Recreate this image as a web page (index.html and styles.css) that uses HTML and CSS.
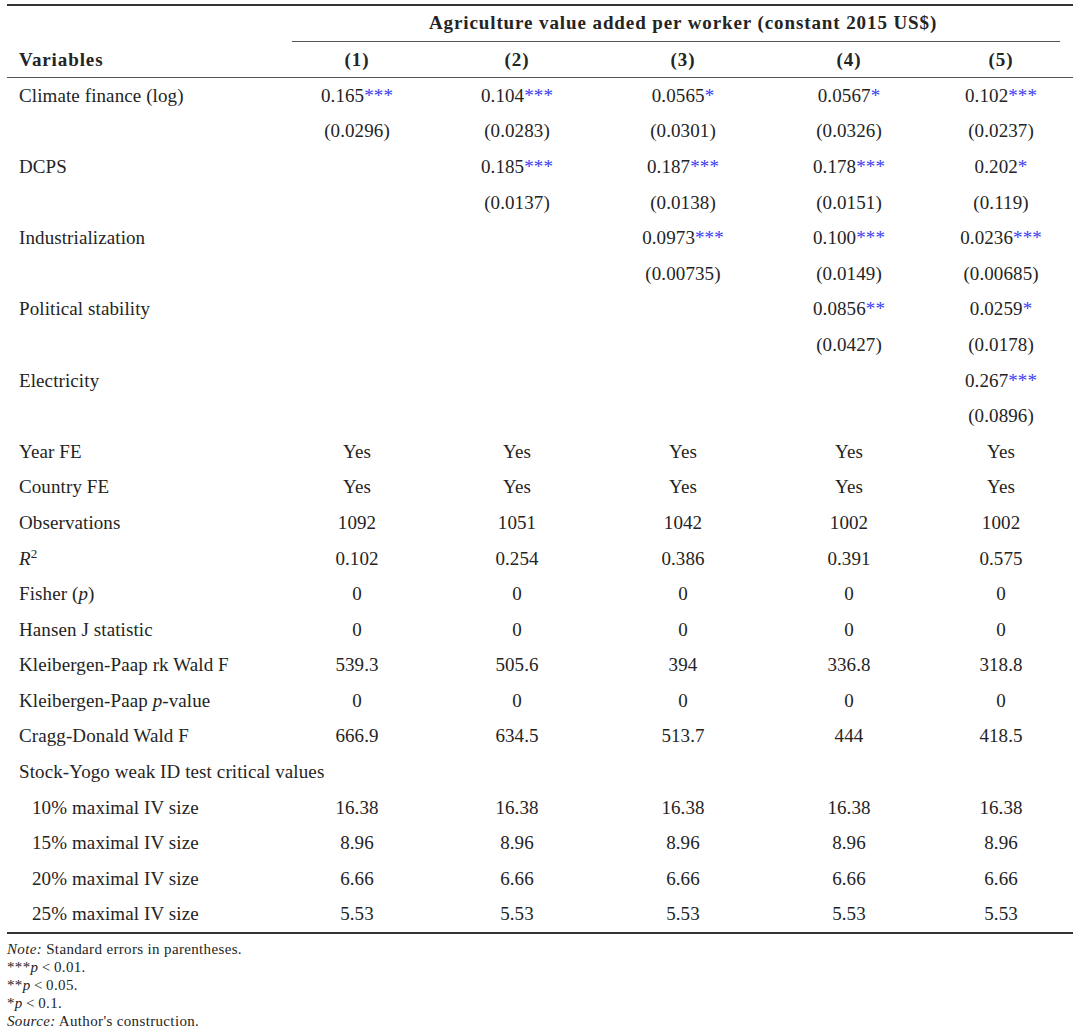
FILE: index.html
```html
<!DOCTYPE html>
<html>
<head>
<meta charset="utf-8">
<link rel="stylesheet" href="styles.css">
</head>
<body>
<div class="page">
<table class="reg">
  <colgroup>
    <col class="c-var"><col class="c1"><col class="c2"><col class="c3"><col class="c4"><col class="c5">
  </colgroup>
  <thead>
    <tr class="h1">
      <th></th>
      <th colspan="5" class="span"><div class="spanline">Agriculture value added per worker (constant 2015 US$)</div></th>
    </tr>
    <tr class="h2">
      <th class="lab">Variables</th><th>(1)</th><th>(2)</th><th>(3)</th><th>(4)</th><th>(5)</th>
    </tr>
  </thead>
  <tbody>
    <tr><td class="lab">Climate finance (log)</td><td>0.165<span class="s">***</span></td><td>0.104<span class="s">***</span></td><td>0.0565<span class="s">*</span></td><td>0.0567<span class="s">*</span></td><td>0.102<span class="s">***</span></td></tr>
    <tr><td class="lab"></td><td>(0.0296)</td><td>(0.0283)</td><td>(0.0301)</td><td>(0.0326)</td><td>(0.0237)</td></tr>
    <tr><td class="lab">DCPS</td><td></td><td>0.185<span class="s">***</span></td><td>0.187<span class="s">***</span></td><td>0.178<span class="s">***</span></td><td>0.202<span class="s">*</span></td></tr>
    <tr><td class="lab"></td><td></td><td>(0.0137)</td><td>(0.0138)</td><td>(0.0151)</td><td>(0.119)</td></tr>
    <tr><td class="lab">Industrialization</td><td></td><td></td><td>0.0973<span class="s">***</span></td><td>0.100<span class="s">***</span></td><td>0.0236<span class="s">***</span></td></tr>
    <tr><td class="lab"></td><td></td><td></td><td>(0.00735)</td><td>(0.0149)</td><td>(0.00685)</td></tr>
    <tr><td class="lab">Political stability</td><td></td><td></td><td></td><td>0.0856<span class="s">**</span></td><td>0.0259<span class="s">*</span></td></tr>
    <tr><td class="lab"></td><td></td><td></td><td></td><td>(0.0427)</td><td>(0.0178)</td></tr>
    <tr><td class="lab">Electricity</td><td></td><td></td><td></td><td></td><td>0.267<span class="s">***</span></td></tr>
    <tr><td class="lab"></td><td></td><td></td><td></td><td></td><td>(0.0896)</td></tr>
    <tr><td class="lab">Year FE</td><td>Yes</td><td>Yes</td><td>Yes</td><td>Yes</td><td>Yes</td></tr>
    <tr><td class="lab">Country FE</td><td>Yes</td><td>Yes</td><td>Yes</td><td>Yes</td><td>Yes</td></tr>
    <tr><td class="lab">Observations</td><td>1092</td><td>1051</td><td>1042</td><td>1002</td><td>1002</td></tr>
    <tr><td class="lab"><i>R</i><sup>2</sup></td><td>0.102</td><td>0.254</td><td>0.386</td><td>0.391</td><td>0.575</td></tr>
    <tr><td class="lab">Fisher (<i>p</i>)</td><td>0</td><td>0</td><td>0</td><td>0</td><td>0</td></tr>
    <tr><td class="lab">Hansen J statistic</td><td>0</td><td>0</td><td>0</td><td>0</td><td>0</td></tr>
    <tr><td class="lab">Kleibergen-Paap rk Wald F</td><td>539.3</td><td>505.6</td><td>394</td><td>336.8</td><td>318.8</td></tr>
    <tr><td class="lab">Kleibergen-Paap <i>p</i>-value</td><td>0</td><td>0</td><td>0</td><td>0</td><td>0</td></tr>
    <tr><td class="lab">Cragg-Donald Wald F</td><td>666.9</td><td>634.5</td><td>513.7</td><td>444</td><td>418.5</td></tr>
    <tr><td class="lab" colspan="6">Stock-Yogo weak ID test critical values</td></tr>
    <tr><td class="lab ind">10% maximal IV size</td><td>16.38</td><td>16.38</td><td>16.38</td><td>16.38</td><td>16.38</td></tr>
    <tr><td class="lab ind">15% maximal IV size</td><td>8.96</td><td>8.96</td><td>8.96</td><td>8.96</td><td>8.96</td></tr>
    <tr><td class="lab ind">20% maximal IV size</td><td>6.66</td><td>6.66</td><td>6.66</td><td>6.66</td><td>6.66</td></tr>
    <tr><td class="lab ind">25% maximal IV size</td><td>5.53</td><td>5.53</td><td>5.53</td><td>5.53</td><td>5.53</td></tr>
  </tbody>
</table>
<div class="notes">
  <div><i>Note:</i> Standard errors in parentheses.</div>
  <div>***<i>p</i>&thinsp;&lt;&thinsp;0.01.</div>
  <div>**<i>p</i>&thinsp;&lt;&thinsp;0.05.</div>
  <div>*<i>p</i>&thinsp;&lt;&thinsp;0.1.</div>
  <div><i>Source:</i> Author's construction.</div>
</div>
</div>
</body>
</html>
```

FILE: styles.css
```css
html, body {
  margin: 0;
  padding: 0;
  background: #ffffff;
}
.page {
  padding: 4px 7px 0 7px;
  font-family: "Liberation Serif", "DejaVu Serif", serif;
  color: #242424;
}
.reg {
  width: 1066px;
  border-collapse: collapse;
  table-layout: fixed;
  font-size: 19px;
  letter-spacing: 0.1px;
  border-top: 2px solid #333333;
  border-bottom: 2px solid #333333;
}
.c-var { width: 270px; }
.c1 { width: 160px; }
.c2 { width: 160px; }
.c3 { width: 172px; }
.c4 { width: 160px; }
.c5 { width: 144px; }
.reg th, .reg td {
  padding: 0;
  text-align: center;
  vertical-align: middle;
  white-space: nowrap;
}
.reg thead th {
  font-weight: bold;
  letter-spacing: 0.9px;
}
.h1 th {
  height: 35px;
  vertical-align: bottom;
}
.span {
  padding: 0 13px 0 15px !important;
}
.spanline {
  border-bottom: 1px solid #555555;
  height: 35px;
  line-height: 34px;
  padding-left: 14px;
}
.h2 th {
  height: 35px;
  border-bottom: 1px solid #555555;
}
.reg tbody td {
  height: 35.6px;
}
.reg .lab {
  text-align: left;
  padding-left: 12px;
}
.reg .ind {
  padding-left: 25px;
}
.s {
  color: #3c3cf2;
}
sup {
  font-size: 13px;
  vertical-align: 7px;
  line-height: 0;
}
.notes {
  font-size: 15px;
  letter-spacing: 0.35px;
  line-height: 18px;
  padding-top: 6px;
}
```
